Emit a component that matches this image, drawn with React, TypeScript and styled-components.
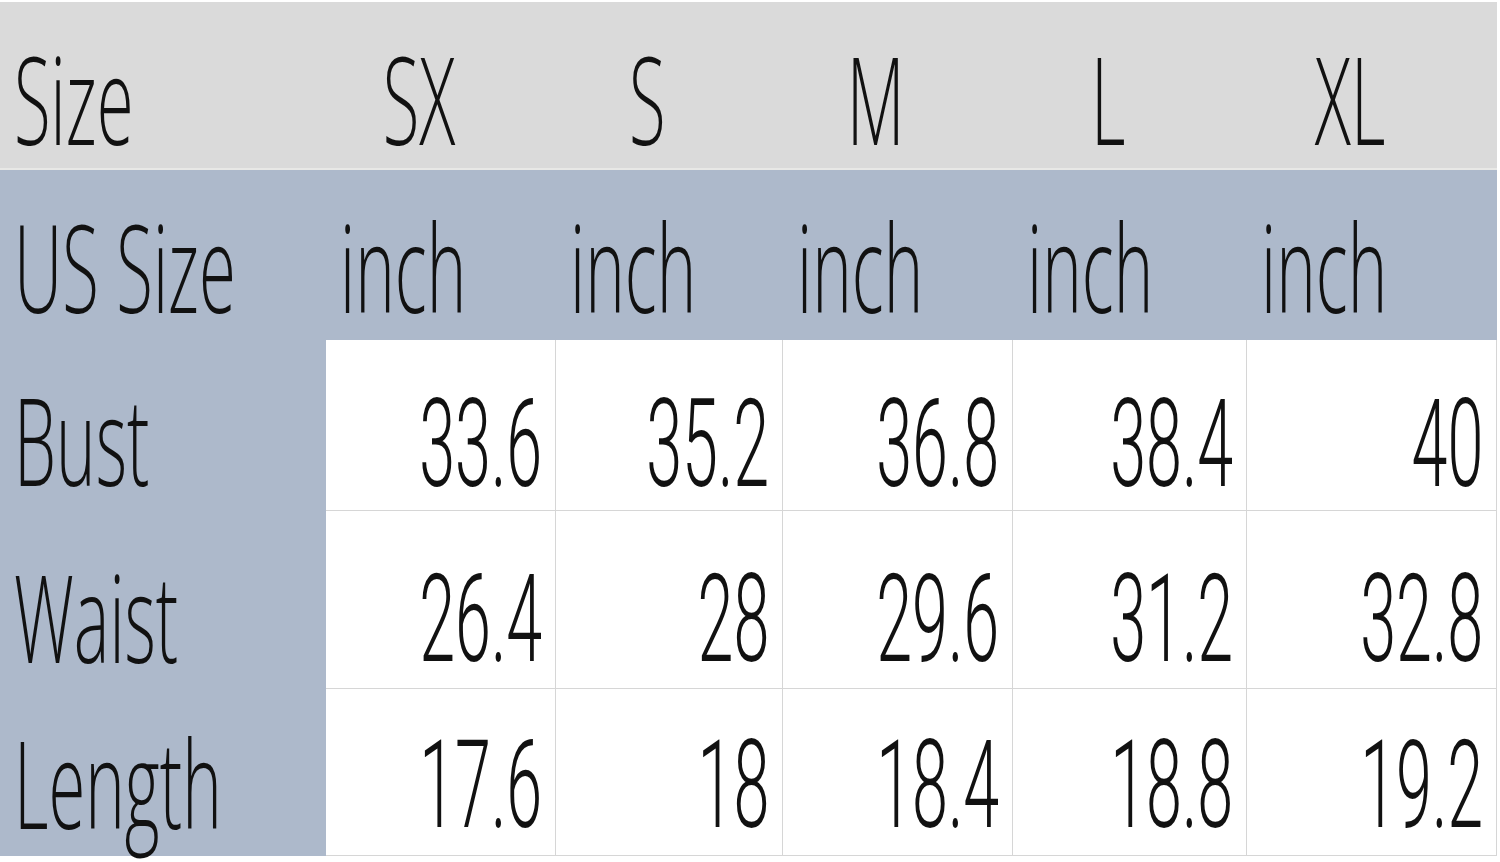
import React from "react";
import styled, { createGlobalStyle } from "styled-components";

const Global = createGlobalStyle`
  html, body { margin: 0; padding: 0; background: #ffffff; }
  body { width: 1500px; height: 862px; overflow: hidden; }
`;

const COLS = "326px 230px 227px 230px 234px 250px";

const Sheet = styled.div`
  padding-top: 2px;
  width: 1497px;
  display: flex;
  flex-direction: column;
`;

type Tone = "head" | "unit" | "data";

const Row = styled.div<{ $h: number; $tone: Tone }>`
  display: grid;
  grid-template-columns: ${COLS};
  height: ${(p) => p.$h}px;
  box-sizing: border-box;
  background: ${(p) => (p.$tone === "head" ? "#dadada" : p.$tone === "unit" ? "#adb9cb" : "#ffffff")};
  border-bottom: ${(p) =>
    p.$tone === "head" ? "2px solid #e8e8e6" : p.$tone === "data" ? "1px solid #d6d6d6" : "none"};
`;

const Cell = styled.div<{ $align: "left" | "center" | "right"; $pb: number; $label?: boolean; $line?: boolean }>`
  display: flex;
  align-items: flex-end;
  justify-content: ${(p) => (p.$align === "left" ? "flex-start" : p.$align === "right" ? "flex-end" : "center")};
  padding: 0 ${(p) => (p.$align === "right" ? 13 : p.$align === "center" ? 44 : 0)}px ${(p) => p.$pb}px
    ${(p) => (p.$align === "left" ? 14 : 0)}px;
  background: ${(p) => (p.$label ? "#adb9cb" : "transparent")};
  border-right: ${(p) => (p.$line ? "1px solid #d6d6d6" : "none")};
  box-sizing: border-box;
  min-width: 0;
  margin-bottom: ${(p) => (p.$label ? "-1px" : "0")};
`;

const Word = styled.span<{ $origin: string }>`
  display: inline-block;
  font-family: "Open Sans", "Noto Sans", sans-serif;
  font-weight: 300;
  font-size: 122px;
  line-height: 1;
  color: #111111;
  white-space: nowrap;
  transform: scaleX(0.55);
  transform-origin: ${(p) => p.$origin} bottom;
`;

const Num = styled.span`
  display: inline-block;
  font-family: Roboto, "Liberation Sans", Arial, sans-serif;
  font-weight: 300;
  font-size: 122px;
  line-height: 1;
  color: #111111;
  white-space: nowrap;
  transform: scaleX(0.53);
  transform-origin: right bottom;
`;

const sizes = ["SX", "S", "M", "L", "XL"];
const data: { label: string; h: number; lpb: number; npb: number; values: string[] }[] = [
  { label: "Bust", h: 171, lpb: 11, npb: 4, values: ["33.6", "35.2", "36.8", "38.4", "40"] },
  { label: "Waist", h: 178, lpb: 12, npb: 7, values: ["26.4", "28", "29.6", "31.2", "32.8"] },
  { label: "Length", h: 167, lpb: 13, npb: 8, values: ["17.6", "18", "18.4", "18.8", "19.2"] },
];

export default function App() {
  return (
    <>
      <Global />
      <Sheet>
        <Row $h={168} $tone="head">
          <Cell $align="left" $pb={9}>
            <Word $origin="left">Size</Word>
          </Cell>
          {sizes.map((s) => (
            <Cell key={s} $align="center" $pb={9}>
              <Word $origin="center">{s}</Word>
            </Cell>
          ))}
        </Row>
        <Row $h={170} $tone="unit">
          <Cell $align="left" $pb={13}>
            <Word $origin="left">US Size</Word>
          </Cell>
          {sizes.map((s) => (
            <Cell key={s} $align="left" $pb={13}>
              <Word $origin="left">inch</Word>
            </Cell>
          ))}
        </Row>
        {data.map((r) => (
          <Row key={r.label} $h={r.h} $tone="data">
            <Cell $align="left" $pb={r.lpb} $label>
              <Word $origin="left">{r.label}</Word>
            </Cell>
            {r.values.map((v, i) => (
              <Cell key={i} $align="right" $pb={r.npb} $line>
                <Num>{v}</Num>
              </Cell>
            ))}
          </Row>
        ))}
      </Sheet>
    </>
  );
}
